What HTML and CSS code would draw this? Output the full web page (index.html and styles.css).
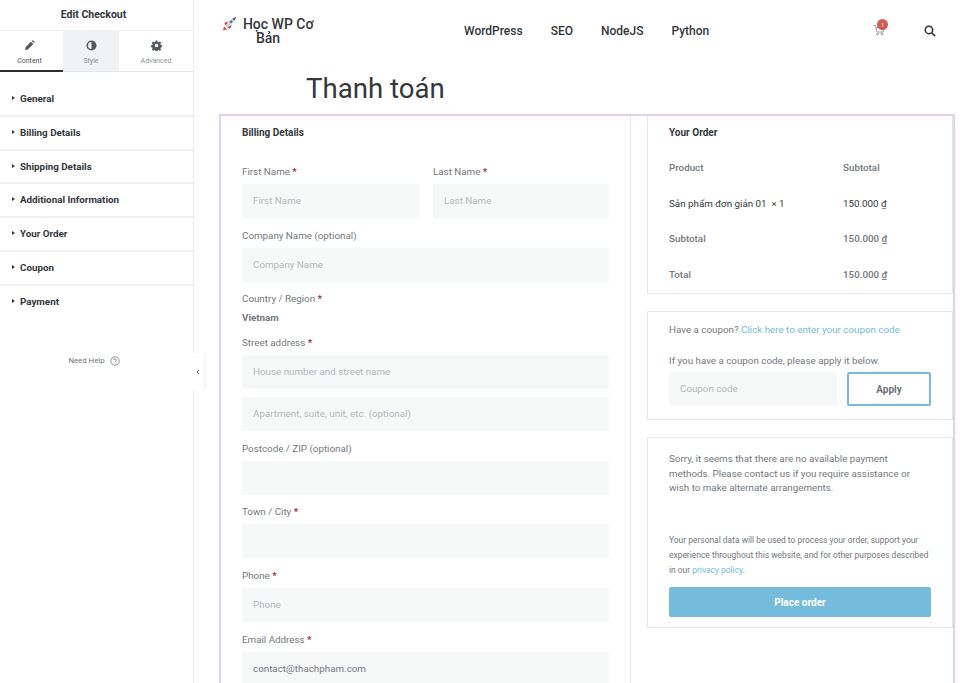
FILE: index.html
```html
<!DOCTYPE html>
<html lang="vi">
<head>
    <meta charset="UTF-8">
    <meta name="viewport" content="width=device-width, initial-scale=1.0">
    <title>Edit Checkout</title>
    <link rel="stylesheet" href="styles.css">
</head>
<body>

<div class="app">
    <!-- Editor panel -->
    <aside class="panel">
        <h1 class="panel-title">Edit Checkout</h1>
        <div class="tabs">
            <div class="tab active">
                <svg class="tab-icon" viewBox="0 0 24 24"><path d="M2 22l1.400-6.400L15.200 3.800l5 5L8.400 20.600zM16.800 2.200l1-1c.6-.6 1.500-.6 2.100 0l2.900 2.900c.6.6.6 1.500 0 2.100l-1 1z"/></svg>
                <span>Content</span>
            </div>
            <div class="tab shaded">
                <svg class="tab-icon" viewBox="0 0 24 24"><path fill-rule="evenodd" d="M12 1a11 11 0 1 0 0 22 11 11 0 0 0 0-22zm0 3.500v15a7.500 7.500 0 0 1 0-15z"/></svg>
                <span>Style</span>
            </div>
            <div class="tab">
                <svg class="tab-icon" viewBox="0 0 24 24"><path fill-rule="evenodd" d="M10 1h4l.6 3.200 2 .9 2.700-1.800 2.900 2.900-1.800 2.700.9 2 3.200.6v4l-3.200.6-.9 2 1.800 2.700-2.900 2.900-2.700-1.800-2 .9-.6 3.200h-4l-.6-3.200-2-.9-2.700 1.800-2.900-2.900 1.800-2.700-.9-2-3.200-.6v-4l3.200-.6.9-2-1.800-2.700 2.900-2.900 2.700 1.800 2-.9zM12 8.200a3.800 3.800 0 1 0 0 7.600 3.800 3.800 0 0 0 0-7.600z"/></svg>
                <span>Advanced</span>
            </div>
        </div>
        <ul class="sections">
            <li>General</li>
            <li>Billing Details</li>
            <li>Shipping Details</li>
            <li>Additional Information</li>
            <li>Your Order</li>
            <li>Coupon</li>
            <li>Payment</li>
        </ul>
        <div class="need-help">
            <span>Need Help</span>
            <svg class="help-icon" viewBox="0 0 20 20"><circle cx="10" cy="10" r="8.500"/><path d="M7.500 8c0-3.300 5-3.300 5 0 0 2-2.500 1.800-2.500 4"/><path d="M10 13.800v1.400"/></svg>
        </div>
    </aside>
    <button class="collapse" type="button" aria-label="Collapse">
        <svg viewBox="0 0 8 10"><path d="M5 3L3 5l2 2"/></svg>
    </button>

    <!-- Page preview -->
    <main class="preview">
        <header class="site-header">
            <div class="logo">
                <svg class="rocket" viewBox="0 0 16 16"><path class="flame" d="M1 15.500l1.200-4.700 3.500 3.500z"/><path class="fin" d="M2.500 7.500l4-2-2.500 5zM8.500 13.500l2-4-5 2.500z"/><path class="body" d="M4 10.500C6 6 9 3.500 12 2.500l1.500 1.500c-1 3-3.500 6-8 8z"/><path class="tip" d="M11 2.800L15.500.5 13.200 5z"/><circle class="window" cx="9.800" cy="6.200" r="1.300"/></svg>
                Học WP Cơ Bản
            </div>
            <nav class="nav">
                <a>WordPress</a>
                <a>SEO</a>
                <a>NodeJS</a>
                <a>Python</a>
            </nav>
            <div class="cart">
                <svg viewBox="0 0 12 12"><path d="M.5 1.500h2l1.500 6.500h6l1-4.500H3"/><circle cx="4.500" cy="10" r="1"/><circle cx="9" cy="10" r="1"/></svg>
                <span class="badge">!</span>
            </div>
            <svg class="search" viewBox="0 0 14 14"><circle cx="5.800" cy="5.800" r="4.300"/><path d="M9 9l4 4"/></svg>
        </header>

        <h2 class="page-title">Thanh toán</h2>

        <div class="checkout">
            <section class="billing">
                <h3 class="block-title">Billing Details</h3>
                <div class="name-row">
                    <div class="field">
                        <label>First Name <b>*</b></label>
                        <div class="input">First Name</div>
                    </div>
                    <div class="field">
                        <label>Last Name <b>*</b></label>
                        <div class="input">Last Name</div>
                    </div>
                </div>
                <div class="field">
                    <label>Company Name (optional)</label>
                    <div class="input">Company Name</div>
                </div>
                <div class="field country">
                    <label>Country / Region <b>*</b></label>
                    <strong>Vietnam</strong>
                </div>
                <div class="field street">
                    <label>Street address <b>*</b></label>
                    <div class="input">House number and street name</div>
                    <div class="input">Apartment, suite, unit, etc. (optional)</div>
                </div>
                <div class="field">
                    <label>Postcode / ZIP (optional)</label>
                    <div class="input"></div>
                </div>
                <div class="field">
                    <label>Town / City <b>*</b></label>
                    <div class="input"></div>
                </div>
                <div class="field">
                    <label>Phone <b>*</b></label>
                    <div class="input">Phone</div>
                </div>
                <div class="field">
                    <label>Email Address <b>*</b></label>
                    <div class="input filled">contact@thachpham.com</div>
                </div>
            </section>

            <section class="side">
                <div class="card order">
                    <h3 class="block-title">Your Order</h3>
                    <div class="order-row head"><span>Product</span><span>Subtotal</span></div>
                    <div class="order-row item"><span>Sản phẩm đơn giản 01 &nbsp;× 1</span><span>150.000 ₫</span></div>
                    <div class="order-row head"><span>Subtotal</span><span>150.000 ₫</span></div>
                    <div class="order-row head"><span>Total</span><span>150.000 ₫</span></div>
                </div>
                <div class="card coupon">
                    <p class="coupon-link">Have a coupon? <a>Click here to enter your coupon code</a></p>
                    <p class="coupon-note">If you have a coupon code, please apply it below.</p>
                    <div class="coupon-form">
                        <div class="input">Coupon code</div>
                        <button class="apply" type="button">Apply</button>
                    </div>
                </div>
                <div class="card payment">
                    <p class="payment-note">Sorry, it seems that there are no available payment methods. Please contact us if you require assistance or wish to make alternate arrangements.</p>
                    <p class="privacy">Your personal data will be used to process your order, support your experience throughout this website, and for other purposes described in our <a>privacy policy</a>.</p>
                    <button class="place-order" type="button">Place order</button>
                </div>
            </section>
        </div>
    </main>
</div>

</body>
</html>
```

FILE: styles.css
```css
* {
    box-sizing: border-box;
}
html, body {
    margin: 0;
    height: 683px;
    overflow: hidden;
}
body {
    font-family: Roboto, "Liberation Sans", sans-serif;
    color: #74787e;
    background: #fff;
}
p, h1, h2, h3, ul {
    margin: 0;
    padding: 0;
}
.app {
    display: flex;
    position: relative;
    height: 683px;
}

/* Editor panel */
.panel {
    width: 194px;
    flex: none;
    border-right: 1px solid #eceef0;
}
.panel-title {
    height: 30px;
    padding-right: 6px;
    font-size: 10.500px;
    font-weight: 700;
    line-height: 29px;
    text-align: center;
    color: #33373c;
}
.tabs {
    display: flex;
    height: 42px;
    border-top: 1px solid #f0f1f2;
    border-bottom: 1px solid #e8e9eb;
}
.tab {
    display: flex;
    flex-direction: column;
    align-items: center;
    padding-top: 9px;
    font-size: 7px;
    color: #8b9095;
}
.tab:nth-child(1) {
    width: 63px;
    padding-right: 4px;
}
.tab:nth-child(2) {
    width: 56px;
}
.tab:nth-child(3) {
    flex: 1;
}
.tab.active {
    color: #4c5055;
    border-bottom: 2px solid #2b2e33;
    height: 41px;
}
.tab.shaded {
    background: #f1f2f3;
}
.tab-icon {
    width: 11px;
    height: 11px;
    margin-bottom: 6px;
    fill: #54595f;
}
.sections {
    list-style: none;
    padding-top: 11px;
}
.sections li {
    position: relative;
    height: 33.800px;
    padding: 10px 0 0 20px;
    border-bottom: 2px solid #eeeff0;
    font-size: 9.800px;
    font-weight: 700;
    line-height: 12px;
    color: #33373c;
}
.sections li::before {
    content: "";
    position: absolute;
    left: 12px;
    top: 13px;
    border-left: 3px solid #33373c;
    border-top: 2.500px solid transparent;
    border-bottom: 2.500px solid transparent;
}
.sections li:last-child {
    border-bottom: 0;
}
.need-help {
    display: flex;
    justify-content: center;
    align-items: center;
    gap: 5px;
    margin-top: 36px;
    padding-right: 5px;
    font-size: 7.800px;
    color: #6d7278;
}
.help-icon {
    width: 10px;
    height: 10px;
    fill: none;
    stroke: #54595f;
    stroke-width: 1.300;
}
.collapse {
    position: absolute;
    left: 193px;
    top: 353px;
    width: 11px;
    height: 37px;
    padding: 0;
    border: 0;
    background: #fff;
    box-shadow: 2px 0 3px rgba(0, 0, 0, 0.04);
}
.collapse svg {
    display: block;
    width: 8px;
    height: 10px;
    margin-left: 1px;
    fill: none;
    stroke: #54595f;
    stroke-width: 1;
}

/* Preview */
.preview {
    flex: 1;
    padding-left: 25px;
    min-width: 0;
}
.site-header {
    display: flex;
    align-items: flex-start;
    height: 62px;
    padding-top: 16px;
}
.logo {
    width: 98px;
    flex: none;
    font-size: 14px;
    font-weight: 500;
    line-height: 14px;
    color: #33373c;
    text-align: center;
}
.rocket {
    display: inline-block;
    vertical-align: -2px;
    width: 15px;
    height: 15px;
    margin-right: 2px;
}
.rocket .body { fill: #cfd4d8; }
.rocket .tip { fill: #3d5a78; }
.rocket .fin { fill: #b8403c; }
.rocket .flame { fill: #e0564f; }
.rocket .window { fill: #4b6f8f; }
.nav {
    display: flex;
    gap: 28px;
    margin-left: 147px;
    padding-top: 8px;
    font-size: 12px;
    font-weight: 500;
    line-height: 15px;
    color: #33373c;
}
.cart {
    position: relative;
    width: 12px;
    height: 12px;
    margin: 8px 0 0 164px;
}
.cart svg {
    display: block;
    width: 12px;
    height: 12px;
    fill: none;
    stroke: #9a9da0;
    stroke-width: 1;
}
.badge {
    position: absolute;
    left: 4px;
    top: -5px;
    width: 11px;
    height: 11px;
    border-radius: 50%;
    background: #cd5f5a;
    color: #fff;
    font-size: 6px;
    line-height: 11px;
    text-align: center;
}
.search {
    width: 12px;
    height: 12px;
    margin: 9px 0 0 39px;
    fill: none;
    stroke: #2b2e33;
    stroke-width: 1.800;
}
.page-title {
    height: 52px;
    padding: 10px 0 0 87px;
    font-size: 27.600px;
    font-weight: 400;
    line-height: 33px;
    color: #33373c;
}

/* Checkout frame */
.checkout {
    display: flex;
    width: 736px;
    height: 569px;
    border: 2px solid #e6cdf3;
    border-bottom: 0;
}
.billing {
    width: 410px;
    flex: none;
    padding: 10px 21px 0 21px;
    border-right: 1px solid #e9eaeb;
}
.block-title {
    font-size: 10px;
    font-weight: 700;
    line-height: 13px;
    color: #33373c;
}
.billing .block-title {
    margin-bottom: 26px;
}
.name-row {
    display: grid;
    grid-template-columns: 177px 176px;
    gap: 14px;
}
.field {
    margin-bottom: 10.700px;
}
.field label {
    display: block;
    height: 13px;
    margin-bottom: 6px;
    font-size: 9.800px;
    line-height: 14px;
}
.field b {
    color: #a5283c;
    font-weight: 700;
}
.input {
    height: 34px;
    padding-left: 11px;
    background: #f7f9f9;
    font-size: 9.800px;
    line-height: 34px;
    color: #b4b7ba;
}
.input.filled {
    color: #74787e;
}
.country {
    margin-bottom: 10.600px;
}
.country strong {
    display: block;
    font-size: 9.800px;
    line-height: 14px;
    font-weight: 700;
}
.street .input + .input {
    margin-top: 8px;
}
.side {
    flex: 1;
    padding-left: 16px;
    min-width: 0;
}
.card {
    border: 1px solid #e7e8ea;
    margin-bottom: 17px;
    padding: 0 21px;
    font-size: 9.800px;
}
.order {
    height: 178px;
    border-top: 0;
    padding-top: 10px;
}
.order .block-title {
    margin-bottom: 10.500px;
}
.order-row {
    display: flex;
    height: 35.700px;
    align-items: center;
}
.order-row span:first-child {
    width: 174px;
}
.order-row.head {
    font-weight: 500;
}
.order-row.item {
    color: #33373c;
}
.coupon {
    height: 109px;
    padding-top: 11px;
}
.coupon-link {
    line-height: 13px;
}
.coupon a, .privacy a {
    color: #74bbdc;
}
.coupon-note {
    margin-top: 18px;
    line-height: 13px;
}
.coupon-form {
    display: flex;
    gap: 10px;
    margin-top: 5px;
}
.coupon-form .input {
    width: 168px;
    flex: none;
}
.apply {
    width: 84px;
    height: 34px;
    padding: 0;
    border: 2px solid #74bbdc;
    border-radius: 2px;
    background: #fff;
    font: 700 10px Roboto, sans-serif;
    color: #6d7278;
}
.payment {
    height: 191px;
    padding-top: 14px;
}
.payment-note {
    line-height: 14.700px;
}
.privacy {
    margin-top: 36.900px;
    font-size: 8.450px;
    line-height: 15px;
}
.place-order {
    display: block;
    width: 262px;
    height: 30px;
    margin-top: 9px;
    padding: 0;
    border: 0;
    border-radius: 2px;
    background: #74bbdc;
    font: 700 10px Roboto, sans-serif;
    color: #fff;
}
```
